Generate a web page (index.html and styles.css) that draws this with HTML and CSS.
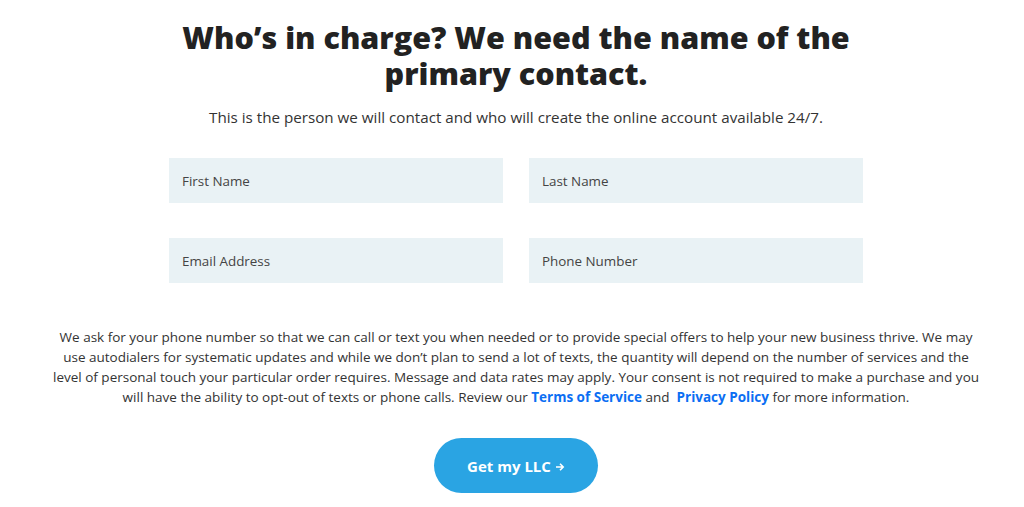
FILE: index.html
```html
<!DOCTYPE html>
<html lang="en">
<head>
  <meta charset="UTF-8" />
  <meta name="viewport" content="width=device-width, initial-scale=1.0"/>
  <title>Primary Contact</title>
  <link rel="stylesheet" href="styles.css">
</head>
<body>
  <div class="page">
    <h1>Who’s in charge? We need the name of the primary contact.</h1>
    <p class="lead">This is the person we will contact and who will create the online account available 24/7.</p>

    <form class="contact-form">
      <input type="text" placeholder="First Name" />
      <input type="text" placeholder="Last Name" />
      <input type="email" placeholder="Email Address" />
      <input type="tel" placeholder="Phone Number" />
    </form>

    <p class="consent">
      We ask for your phone number so that we can call or text you when needed or to provide special offers to help your new business thrive. We may use autodialers for systematic updates and while we don’t plan to send a lot of texts, the quantity will depend on the number of services and the level of personal touch your particular order requires. Message and data rates may apply. Your consent is not required to make a purchase and you will have the ability to opt-out of texts or phone calls. Review our <a href="#">Terms of Service</a> and &nbsp;<a href="#">Privacy Policy</a> for more information.
    </p>

    <div class="actions">
      <button type="button">Get my LLC
        <svg class="arrow" width="10" height="10" viewBox="0 0 10 10"><path d="M1 5h7M5 1.8L8.2 5 5 8.2" fill="none" stroke="#fff" stroke-width="1.6"/></svg>
      </button>
    </div>
  </div>
</body>
</html>
```

FILE: styles.css
```css
body { margin: 0; font-family: "Open Sans", Arial, sans-serif; background: #fff; color: #333; }
.page { padding: 19px 0 0 8px; display: flex; flex-direction: column; align-items: center; }
h1 { margin: 0; max-width: 690px; text-align: center; font-size: 30.5px; line-height: 36px; font-weight: 800; color: #222; }
.lead { margin: 16px 0 0; font-size: 15.2px; color: #333; text-align: center; }
.contact-form { margin-top: 31px; width: 694px; display: grid; grid-template-columns: 1fr 1fr; column-gap: 26px; row-gap: 35px; }
.contact-form input { height: 45px; box-sizing: border-box; border: none; background: #e9f2f5; padding: 0 13px; font-family: inherit; font-size: 13.4px; color: #333; outline: none; }
.contact-form input::placeholder { color: #444; }
.consent { margin: 44px 0 0; max-width: 930px; text-align: center; font-size: 13.5px; line-height: 20px; color: #333; }
.consent a { color: #0b6ef3; font-weight: 700; text-decoration: none; }
.actions { margin-top: 31px; }
.actions button { width: 164px; height: 55px; border: none; border-radius: 28px; background: #2aa4e3; color: #fff; font-family: inherit; font-size: 15px; font-weight: 700; cursor: pointer; display: flex; align-items: center; justify-content: center; gap: 4px; }
.arrow { margin-top: 2px; }
```
